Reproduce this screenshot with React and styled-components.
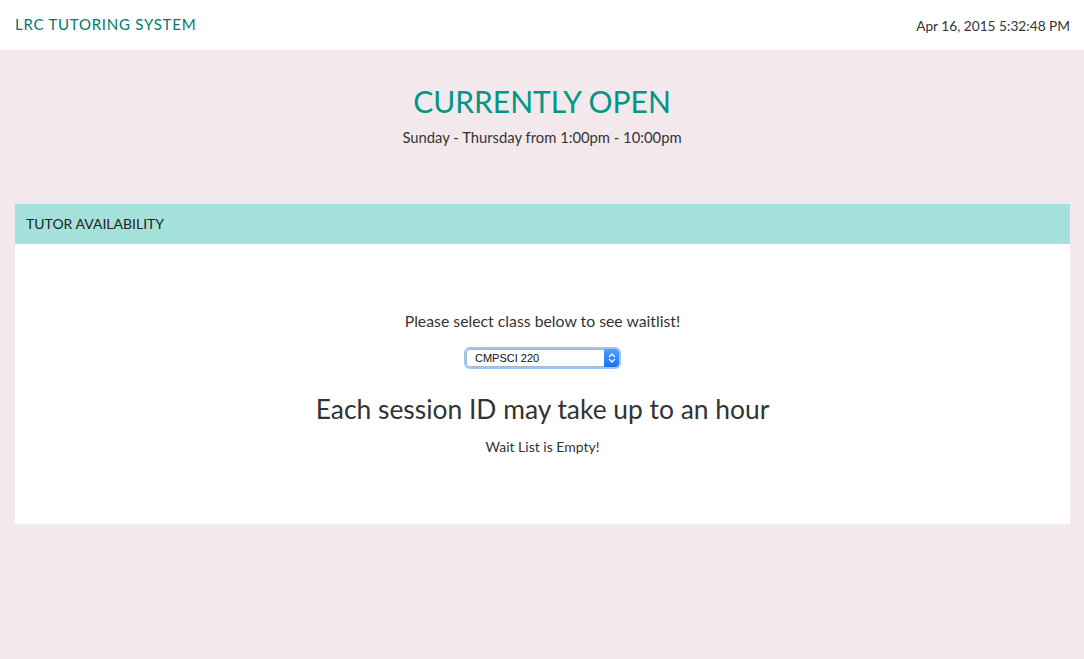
import React from "react";
import styled, { createGlobalStyle } from "styled-components";

const Global = createGlobalStyle`
  html, body { margin: 0; padding: 0; }
  body {
    background: #f3e9ed;
    font-family: Lato, "Open Sans", sans-serif;
    color: #333;
    min-height: 659px;
  }
`;

const Header = styled.header`
  height: 50px;
  background: #fff;
  display: flex;
  align-items: center;
  justify-content: space-between;
  padding: 0 14px 0 15px;
`;

const Brand = styled.div`
  font-size: 15px;
  color: #00796b;
  letter-spacing: 0.75px;
  padding-bottom: 2px;
`;

const Clock = styled.div`
  font-size: 13.7px;
  color: #333;
`;

const Hero = styled.section`
  display: flex;
  flex-direction: column;
  align-items: center;
  padding-top: 33px;
  height: 120px;
  box-sizing: border-box;
`;

const HeroTitle = styled.h1`
  margin: 0;
  font-size: 30px;
  font-weight: 400;
  color: #009688;
  line-height: 36px;
`;

const HeroSub = styled.p`
  margin: 9px 0 0;
  font-size: 14.8px;
  line-height: 18px;
  color: #333;
`;

const Panel = styled.section`
  margin: 34px 14px 0 15px;
  background: #fff;
`;

const PanelHead = styled.div`
  height: 40px;
  background: #a5e1db;
  display: flex;
  align-items: center;
  padding-left: 11px;
  font-size: 14px;
  color: #222;
  padding-bottom: 1px;
  box-sizing: border-box;
`;

const PanelBody = styled.div`
  height: 280px;
  display: flex;
  flex-direction: column;
  align-items: center;
  padding-top: 67px;
  box-sizing: border-box;
`;

const Prompt = styled.p`
  margin: 0;
  font-size: 15.8px;
  line-height: 20px;
`;

const SelectWrap = styled.div`
  margin-top: 18px;
  width: 153px;
  height: 18px;
  position: relative;
  border-radius: 4px;
  box-shadow: 0 0 0 2px #9cc6f7;
  background: #fff;
  display: flex;
  align-items: center;
`;

const Select = styled.select`
  appearance: none;
  -webkit-appearance: none;
  border: 1px solid #a8b8cc;
  border-radius: 4px;
  width: 100%;
  height: 18px;
  font-family: "Liberation Sans", Arial, sans-serif;
  font-size: 11px;
  padding: 0 0 0 8px;
  background: transparent;
  color: #111;
  outline: none;
`;

const Stepper = styled.div`
  position: absolute;
  right: 0;
  top: 0;
  width: 15px;
  height: 18px;
  border-radius: 0 4px 4px 0;
  background: linear-gradient(#4fa0ff, #1a6ff0);
  display: flex;
  align-items: center;
  justify-content: center;
  pointer-events: none;
`;

const Heading = styled.h2`
  margin: 26px 0 0;
  font-size: 26.4px;
  font-weight: 400;
  line-height: 32px;
  color: #333;
`;

const Empty = styled.p`
  margin: 13px 0 0;
  font-size: 14px;
  line-height: 18px;
`;

export default function App() {
  return (
    <>
      <Global />
      <Header>
        <Brand>LRC TUTORING SYSTEM</Brand>
        <Clock>Apr 16, 2015 5:32:48 PM</Clock>
      </Header>
      <Hero>
        <HeroTitle>CURRENTLY OPEN</HeroTitle>
        <HeroSub>Sunday - Thursday from 1:00pm - 10:00pm</HeroSub>
      </Hero>
      <Panel>
        <PanelHead>TUTOR AVAILABILITY</PanelHead>
        <PanelBody>
          <Prompt>Please select class below to see waitlist!</Prompt>
          <SelectWrap>
            <Select defaultValue="CMPSCI 220">
              <option>CMPSCI 220</option>
            </Select>
            <Stepper>
              <svg width="8" height="12" viewBox="0 0 8 12" fill="none" stroke="#fff" strokeWidth="1.4" strokeLinecap="round" strokeLinejoin="round">
                <path d="M1.5 4.5 L4 2 L6.5 4.5" />
                <path d="M1.5 7.5 L4 10 L6.5 7.5" />
              </svg>
            </Stepper>
          </SelectWrap>
          <Heading>Each session ID may take up to an hour</Heading>
          <Empty>Wait List is Empty!</Empty>
        </PanelBody>
      </Panel>
    </>
  );
}
